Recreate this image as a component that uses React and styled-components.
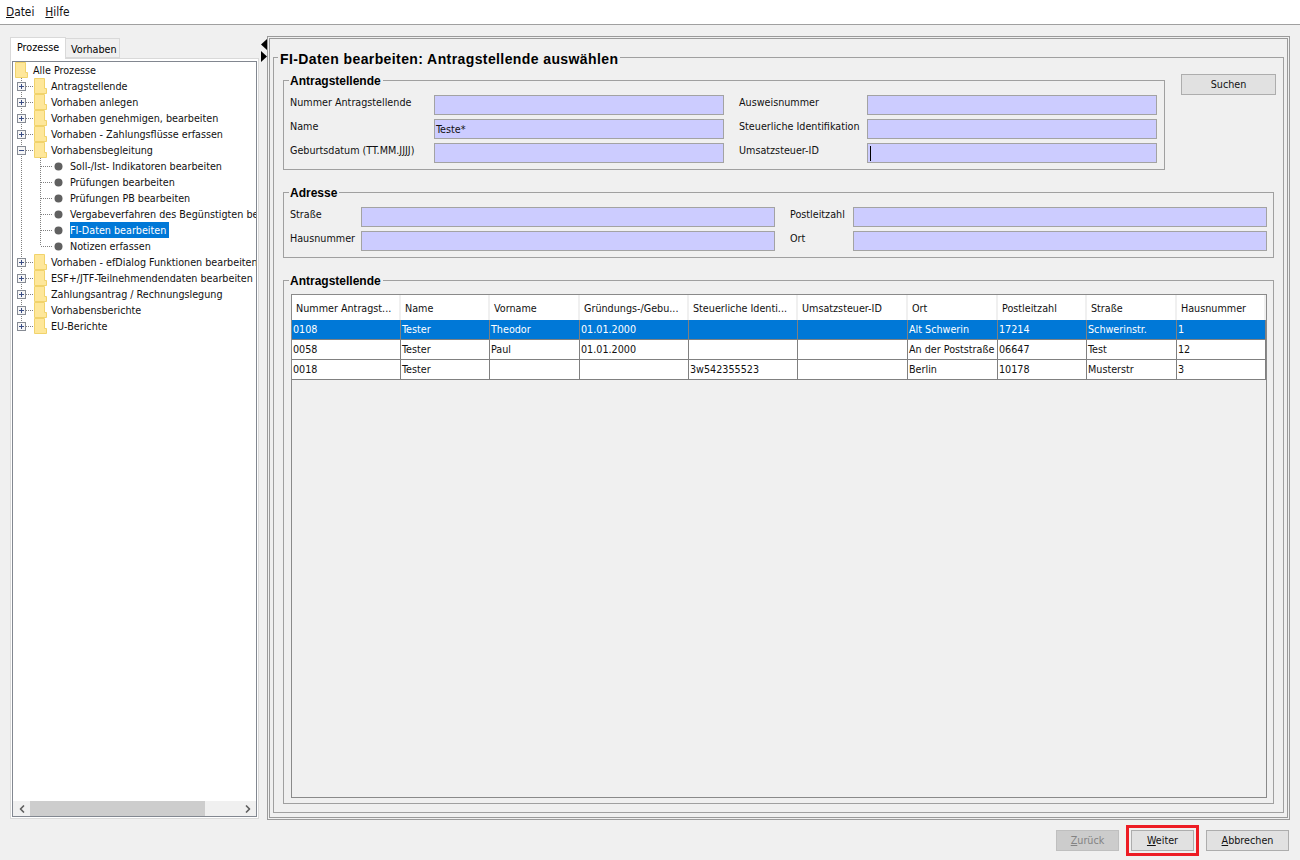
import React from "react";
import styled, { createGlobalStyle } from "styled-components";
import { ChevronLeft, ChevronRight } from "lucide-react";

const GlobalStyle = createGlobalStyle`
  html, body {
    margin: 0;
    padding: 0;
    background: #f0f0f0;
  }
  * {
    box-sizing: border-box;
  }
`;

const Page = styled.div`
  width: 1300px;
  height: 860px;
  display: flex;
  flex-direction: column;
  overflow: hidden;
  background: #f0f0f0;
  color: #000;
  font-family: "DejaVu Sans Condensed", "DejaVu Sans", sans-serif;
  font-stretch: condensed;
  font-size: 10.7px;
`;

const MenuBar = styled.div`
  height: 25px;
  flex: none;
  display: flex;
  gap: 11px;
  align-items: center;
  padding: 0 6px 1px;
  background: #fff;
  border-bottom: 1px solid #a0a0a0;
  font-size: 11.8px;
`;

const MenuItem = styled.span`
  color: #111;
`;

const Main = styled.div`
  flex: 1;
  min-height: 0;
  display: flex;
  padding: 11px 10px 0;
`;

/* left side */
const TabPane = styled.div`
  width: 249px;
  flex: none;
  display: flex;
  flex-direction: column;
  padding-top: 1px;
  padding-bottom: 1px;
`;

const TabRow = styled.div`
  height: 21px;
  flex: none;
  display: flex;
  align-items: flex-end;
`;

const Tab = styled.div`
  height: ${(p) => (p.$active ? "22px" : "20px")};
  width: ${(p) => p.$width}px;
  margin-bottom: ${(p) => (p.$active ? "-1px" : "0")};
  position: relative;
  z-index: ${(p) => (p.$active ? 1 : 0)};
  padding: ${(p) => (p.$active ? "3px 0 0 6px" : "4px 0 0 5px")};
  background: ${(p) => (p.$active ? "#fff" : "#f0f0f0")};
  border: 1px solid #d9d9d9;
  border-left-width: ${(p) => (p.$active ? "1px" : "0")};
  border-bottom: ${(p) => (p.$active ? "none" : "1px solid #d9d9d9")};
`;

const TabBody = styled.div`
  flex: 1;
  min-height: 0;
  display: flex;
  padding: 2px 1px 1px;
  background: #fff;
  border: 1px solid #d9d9d9;
`;

const TreeFrame = styled.div`
  flex: 1;
  min-width: 0;
  display: flex;
  flex-direction: column;
  background: #fff;
  border: 1px solid #828790;
`;

const Tree = styled.div`
  flex: 1;
  min-height: 0;
  overflow: hidden;
`;

const TreeRow = styled.div`
  height: 16px;
  display: flex;
  white-space: nowrap;
  line-height: 15px;
`;

const TreeLabel = styled.span`
  padding: 1px 3px 0 0;
  background: ${(p) => (p.$selected ? "#0078d7" : "transparent")};
  color: ${(p) => (p.$selected ? "#fff" : "#111")};
`;

const Gutter = styled.svg`
  flex: none;
  display: block;
`;

const ScrollBar = styled.div`
  height: 15px;
  flex: none;
  display: flex;
  align-items: stretch;
  justify-content: space-between;
  background: #f0f0f0;
`;

const ScrollTrack = styled.div`
  flex: 1;
  padding-right: 34px;
`;

const ScrollThumb = styled.div`
  height: 100%;
  background: #cdcdcd;
`;

const ScrollArrow = styled.div`
  width: 17px;
  flex: none;
  display: flex;
  align-items: center;
  justify-content: center;
  color: #606060;
`;

const Splitter = styled.div`
  width: 8px;
  flex: none;
  padding: 3px 0 0 2px;
  display: flex;
  flex-direction: column;
  gap: 1px;
`;

const Grip = styled.svg`
  display: block;
`;

/* right side */
const WizardFrame = styled.div`
  flex: 1;
  min-width: 0;
  display: flex;
  padding: 11px 3px 4px;
  border: 3px double #9a9a9a;
`;

const Group = styled.fieldset`
  margin: 0;
  min-width: 0;
  padding: ${(p) => p.$padding || "0"};
  border: 1px solid #a0a0a0;
  display: flex;
  flex-direction: column;
  flex: ${(p) => (p.$grow ? "1" : "none")};
  width: ${(p) => (p.$width ? `${p.$width}px` : "auto")};
`;

const Legend = styled.legend`
  padding: 0 2px 0 ${(p) => (p.$big ? "2px" : "1px")};
  margin-left: ${(p) => (p.$big ? "-5px" : "-1px")};
  font-family: "Liberation Sans", Arial, sans-serif;
  font-stretch: normal;
  font-weight: bold;
  font-size: ${(p) => (p.$big ? "14px" : "12px")};
  letter-spacing: ${(p) => (p.$big ? "0.4px" : "0")};
  line-height: 15px;
  transform: translateY(${(p) => (p.$big ? "2px" : "1px")});
`;

const SearchRow = styled.div`
  display: flex;
  align-items: flex-start;
`;

const SearchBtnWrap = styled.div`
  margin: 1px 0 0 16px;
`;

const FormGrid = styled.div`
  display: grid;
  grid-template-columns: ${(p) => p.$columns};
  grid-auto-rows: 20px;
  row-gap: 4px;
`;

const FieldLabel = styled.span`
  line-height: 16px;
  color: #111;
  white-space: nowrap;
`;

const Field = styled.div`
  height: 20px;
  padding-left: 1px;
  line-height: 19px;
  background: #ccccff;
  border: 1px solid #a3a3a3;
  margin-right: ${(p) => (p.$gap ? "15px" : "0")};
  color: #111;
  display: flex;
  align-items: center;
`;

const Caret = styled.span`
  display: block;
  width: 1px;
  height: 15px;
  margin-left: 1px;
  background: #000;
`;

const Table = styled.div`
  flex: 1;
  min-height: 0;
  margin-left: 1px;
  border: 1px solid #8a8a8a;
  background: #f0f0f0;
`;

const Row = styled.div`
  display: grid;
  grid-template-columns: 109px 89px 90px 109px 109px 110px 90px 89px 90px 89px;
  height: ${(p) => (p.$header ? "25px" : "20px")};
  background: ${(p) => (p.$header ? "#fff" : p.$selected ? "#0078d7" : "#fff")};
  color: ${(p) => (p.$selected ? "#fff" : "#111")};
  border-bottom: ${(p) => (p.$header ? "none" : "1px solid #808080")};
`;

const HeadCell = styled.div`
  padding: 7px 0 0 4px;
  white-space: nowrap;
  overflow: hidden;
  border-right: 2px solid #f0f0f0;
`;

const Cell = styled.div`
  padding: 2px 0 0 1px;
  line-height: 16px;
  white-space: nowrap;
  overflow: hidden;
  border-right: 1px solid #808080;
`;

const Footer = styled.div`
  height: 40px;
  flex: none;
  display: flex;
  justify-content: flex-end;
  align-items: center;
  gap: 7px;
  padding: 1px 11px 0 0;
`;

const Button = styled.button`
  width: ${(p) => p.$width}px;
  height: 21px;
  padding: 0 0 1px;
  font: inherit;
  color: ${(p) => (p.disabled ? "#838383" : "#111")};
  background: ${(p) => (p.disabled ? "#cccccc" : "#e1e1e1")};
  border: 1px solid ${(p) => (p.disabled ? "#bfbfbf" : "#adadad")};
`;

const HighlightBox = styled.div`
  height: 31px;
  padding: 2px;
  border: 3px solid #ed1c24;
`;

const Spaced = styled.div`
  margin-top: ${(p) => p.$top}px;
`;

const ROOT_X = 13;

const Folder = ({ x }) => (
  <path
    d={`M${x + 0.5} 0.5H${x + 10.5}V10.5H${x + 12.5}V15.5H${x + 0.5}Z`}
    fill="#fee79a"
    stroke="#f1d36c"
  />
);

const Dots = ({ d }) => (
  <path d={d} fill="none" stroke="#808080" strokeDasharray="1 1" shapeRendering="crispEdges" />
);

const TreeIcon = ({ level, open, last, lastChild }) => {
  const width = level === 0 ? 20 : level === 1 ? 38 : 57;
  return (
    <Gutter width={width} height="16" viewBox={`${ROOT_X} 0 ${width} 16`}>
      {level === 0 && <Folder x={15} />}
      {level === 1 && (
        <>
          <Dots d={`M21.5 0V${last ? 8 : 16}M26 8.5H33`} />
          <rect x="17.5" y="4.5" width="8" height="8" fill="#f6f6f6" stroke="#868b94" shapeRendering="crispEdges" />
          <path
            d={open ? "M19 8.5H24" : "M19 8.5H24M21.5 6V11"}
            stroke="#3a4d85"
            shapeRendering="crispEdges"
          />
          <Folder x={34} />
        </>
      )}
      {level === 2 && (
        <>
          <Dots d={`M21.5 0V16M40.5 0V${lastChild ? 8 : 16}M41 8.5H53`} />
          <circle cx="58.5" cy="8.5" r="4" fill="#606060" />
        </>
      )}
    </Gutter>
  );
};

const treeItems = [
  { level: 0, text: "Alle Prozesse" },
  { level: 1, text: "Antragstellende" },
  { level: 1, text: "Vorhaben anlegen" },
  { level: 1, text: "Vorhaben genehmigen, bearbeiten" },
  { level: 1, text: "Vorhaben - Zahlungsflüsse erfassen" },
  { level: 1, text: "Vorhabensbegleitung", open: true },
  { level: 2, text: "Soll-/Ist- Indikatoren bearbeiten" },
  { level: 2, text: "Prüfungen bearbeiten" },
  { level: 2, text: "Prüfungen PB bearbeiten" },
  { level: 2, text: "Vergabeverfahren des Begünstigten bearbeiten" },
  { level: 2, text: "FI-Daten bearbeiten", selected: true },
  { level: 2, text: "Notizen erfassen", lastChild: true },
  { level: 1, text: "Vorhaben - efDialog Funktionen bearbeiten" },
  { level: 1, text: "ESF+/JTF-Teilnehmendendaten bearbeiten" },
  { level: 1, text: "Zahlungsantrag / Rechnungslegung" },
  { level: 1, text: "Vorhabensberichte" },
  { level: 1, text: "EU-Berichte", last: true },
];

const headers = [
  "Nummer Antragst...",
  "Name",
  "Vorname",
  "Gründungs-/Gebu...",
  "Steuerliche Identi...",
  "Umsatzsteuer-ID",
  "Ort",
  "Postleitzahl",
  "Straße",
  "Hausnummer",
];

const rows = [
  ["0108", "Tester", "Theodor", "01.01.2000", "", "", "Alt Schwerin", "17214", "Schwerinstr.", "1"],
  ["0058", "Tester", "Paul", "01.01.2000", "", "", "An der Poststraße", "06647", "Test", "12"],
  ["0018", "Tester", "", "", "3w542355523", "", "Berlin", "10178", "Musterstr", "3"],
];

const App = () => (
  <Page>
    <GlobalStyle />
    <MenuBar>
      <MenuItem>
        <u>D</u>atei
      </MenuItem>
      <MenuItem>
        <u>H</u>ilfe
      </MenuItem>
    </MenuBar>

    <Main>
      <TabPane>
        <TabRow>
          <Tab $active $width={56}>Prozesse</Tab>
          <Tab $width={54}>Vorhaben</Tab>
        </TabRow>
        <TabBody>
          <TreeFrame>
            <Tree>
              {treeItems.map((item) => (
                <TreeRow key={item.text}>
                  <TreeIcon {...item} />
                  <TreeLabel $selected={item.selected}>{item.text}</TreeLabel>
                </TreeRow>
              ))}
            </Tree>
            <ScrollBar>
              <ScrollArrow>
                <ChevronLeft size={12} strokeWidth={3.5} />
              </ScrollArrow>
              <ScrollTrack>
                <ScrollThumb />
              </ScrollTrack>
              <ScrollArrow>
                <ChevronRight size={12} strokeWidth={3.5} />
              </ScrollArrow>
            </ScrollBar>
          </TreeFrame>
        </TabBody>
      </TabPane>

      <Splitter>
        <Grip width="6" height="11" viewBox="0 0 6 11">
          <path d="M6 0V11L0 5.5Z" fill="#000" />
        </Grip>
        <Grip width="6" height="11" viewBox="0 0 6 11">
          <path d="M0 0V11L6 5.5Z" fill="#000" />
        </Grip>
      </Splitter>

      <WizardFrame>
        <Group $grow $padding="8px 9px 8px 9px">
          <Legend $big>FI-Daten bearbeiten: Antragstellende auswählen</Legend>
          <SearchRow>
            <Group $width={882} $padding="7px 7px 6px 6px">
              <Legend>Antragstellende</Legend>
              <FormGrid $columns="144px 305px 128px 290px">
                <FieldLabel>Nummer Antragstellende</FieldLabel>
                <Field $gap />
                <FieldLabel>Ausweisnummer</FieldLabel>
                <Field />
                <FieldLabel>Name</FieldLabel>
                <Field $gap>Teste*</Field>
                <FieldLabel>Steuerliche Identifikation</FieldLabel>
                <Field />
                <FieldLabel>Geburtsdatum (TT.MM.JJJJ)</FieldLabel>
                <Field $gap />
                <FieldLabel>Umsatzsteuer-ID</FieldLabel>
                <Field>
                  <Caret />
                </Field>
              </FormGrid>
            </Group>
            <SearchBtnWrap>
              <Button $width={95}>Suchen</Button>
            </SearchBtnWrap>
          </SearchRow>

          <Spaced $top={15}>
            <Group $padding="7px 6px 6px 6px">
              <Legend>Adresse</Legend>
              <FormGrid $columns="71px 429px 63px 414px">
                <FieldLabel>Straße</FieldLabel>
                <Field $gap />
                <FieldLabel>Postleitzahl</FieldLabel>
                <Field />
                <FieldLabel>Hausnummer</FieldLabel>
                <Field $gap />
                <FieldLabel>Ort</FieldLabel>
                <Field />
              </FormGrid>
            </Group>
          </Spaced>

          <Spaced $top={15} />
          <Group $grow $padding="6px 6px 5px 6px">
            <Legend>Antragstellende</Legend>
            <Table>
              <Row $header>
                {headers.map((h) => (
                  <HeadCell key={h}>{h}</HeadCell>
                ))}
              </Row>
              {rows.map((row, i) => (
                <Row key={row[0]} $selected={i === 0}>
                  {row.map((value, j) => (
                    <Cell key={j}>{value}</Cell>
                  ))}
                </Row>
              ))}
            </Table>
          </Group>
        </Group>
      </WizardFrame>
    </Main>

    <Footer>
      <Button $width={63} disabled>
        <u>Z</u>urück
      </Button>
      <HighlightBox>
        <Button $width={63}>
          <u>W</u>eiter
        </Button>
      </HighlightBox>
      <Button $width={83}>
        <u>A</u>bbrechen
      </Button>
    </Footer>
  </Page>
);

export default App;
